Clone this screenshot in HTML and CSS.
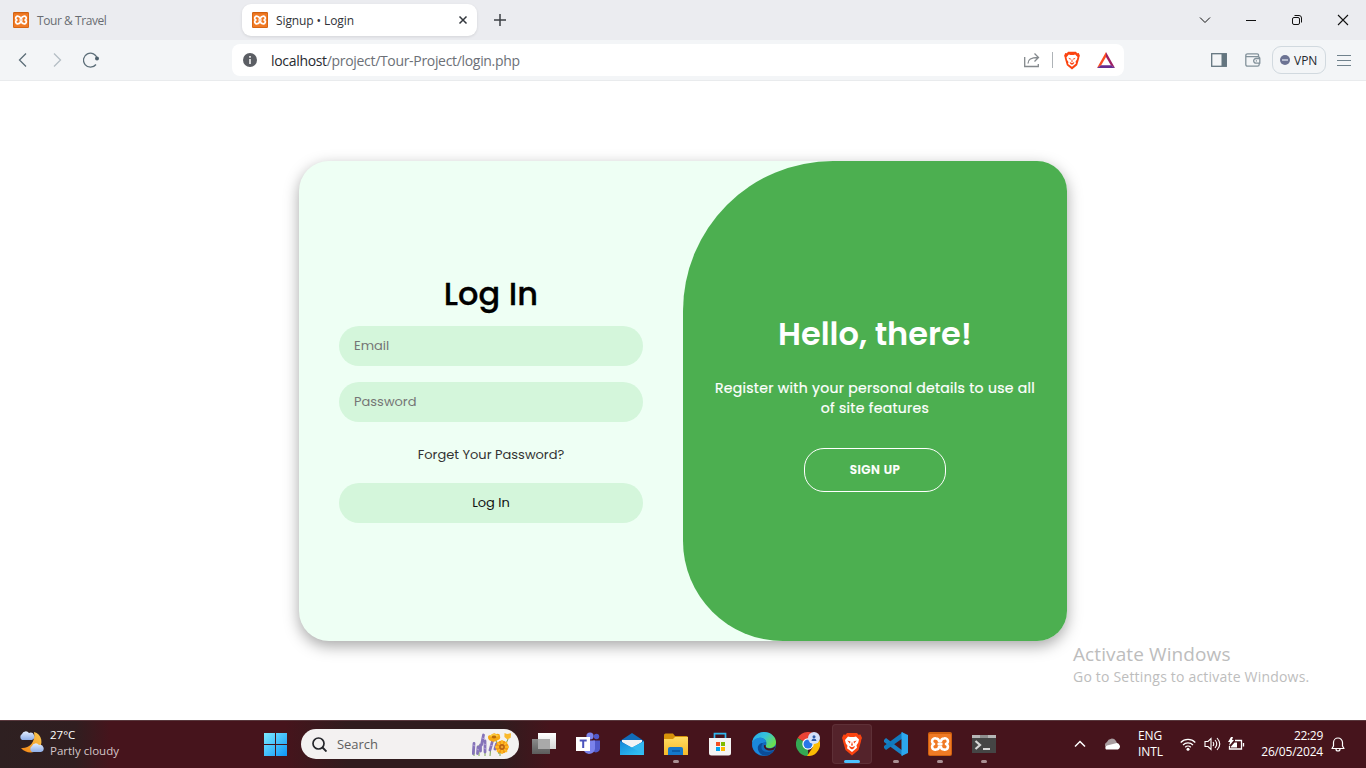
FILE: index.html
```html
<!DOCTYPE html>
<html lang="en">
<head>
<meta charset="utf-8">
<title>Signup • Login</title>
<link rel="stylesheet" href="styles.css">
</head>
<body>
<svg class="defs" aria-hidden="true">
  <defs>
    <symbol id="xampp" viewBox="0 0 24 24">
      <rect width="24" height="24" rx="2" fill="#d0600f"/>
      <rect x="1" y="2" width="22" height="21" rx="1" fill="#f07a25"/>
      <path d="M8 6.500a2.900 2.900 0 0 0-2 5.500 2.900 2.900 0 0 0 2 5.500c2.200 0 2.800-1 3-2.700h2c.2 1.700.8 2.700 3 2.700a2.900 2.900 0 0 0 2-5.500 2.900 2.900 0 0 0-2-5.500c-2.200 0-2.800 1-3 2.700h-2c-.2-1.700-.8-2.700-3-2.700zM9.500 12h5" fill="none" stroke="#fff" stroke-width="2.600" stroke-linejoin="round"/>
    </symbol>
    <symbol id="brave" viewBox="0 0 20 24">
      <path d="M5 1h10l1.500 1.800 2-.3L20 6l-.8 2L19 9.500 16.500 18 10 23.500 3.500 18 1 9.500.8 8 0 6l1.500-3.500 2 .3z" fill="#fb4310"/>
      <path d="M6 4.500l2 .5h4l2-.5 3 3-.8 3.300-1.700 2.500.5 2.500L10 20l-5-3.700.5-2.500-1.700-2.500L3 8z" fill="#fff"/>
      <path d="M5.300 8.500l3.200 1-.6 2zM14.700 8.500l-3.200 1 .6 2zM10 9.500l1 4h-2zM7 14l3 1.300 3-1.300-1 2.300-2 1.200-2-1.200z" fill="#fb4310"/>
    </symbol>
    <linearGradient id="winG" x1="0" y1="0" x2="1" y2="1"><stop offset="0" stop-color="#7ceaff"/><stop offset="1" stop-color="#0c95f8"/></linearGradient>
    <linearGradient id="edgeA" x1="0" y1="0" x2="1" y2=".6"><stop offset="0" stop-color="#27a9e8"/><stop offset=".5" stop-color="#35c1dc"/><stop offset="1" stop-color="#6be04d"/></linearGradient>
    <linearGradient id="folderG" x1="0" y1="0" x2="0" y2="1"><stop offset="0" stop-color="#ffdc62"/><stop offset="1" stop-color="#f6b92a"/></linearGradient>
    <linearGradient id="mailG" x1="0" y1="0" x2="1" y2="1"><stop offset="0" stop-color="#1387d8"/><stop offset="1" stop-color="#35c8f7"/></linearGradient>
    <linearGradient id="moonG" x1="1" y1="0" x2="0" y2="1"><stop offset="0" stop-color="#f9ca52"/><stop offset="1" stop-color="#f58411"/></linearGradient>
    <linearGradient id="cloudG" x1="0" y1="0" x2="0" y2="1"><stop offset="0" stop-color="#e3edfd"/><stop offset="1" stop-color="#8eaee8"/></linearGradient>
    <linearGradient id="whiteG" x1="0" y1="0" x2="0" y2="1"><stop offset="0" stop-color="#fff"/><stop offset="1" stop-color="#d6d6d6"/></linearGradient>
    <linearGradient id="grayG" x1="0" y1="0" x2="0" y2="1"><stop offset="0" stop-color="#8a8a8a"/><stop offset="1" stop-color="#5c5c5c"/></linearGradient>
  </defs>
</svg>

<header class="tabstrip">
  <div class="tab">
    <svg class="favicon"><use href="#xampp"/></svg><span class="tab-title t-tour">Tour &amp; Travel</span>
  </div>
  <div class="tab active">
    <svg class="favicon"><use href="#xampp"/></svg><span class="tab-title t-sign">Signup • Login</span>
    <svg class="tab-close" viewBox="0 0 10 10"><path d="M1.500 1.500l7 7m0-7l-7 7" stroke="#33373d" stroke-width="1.500"/></svg>
  </div>
  <svg class="newtab" viewBox="0 0 12 12"><path d="M6 0v12M0 6h12" stroke="#3c3f44" stroke-width="1.500"/></svg>
  <div class="window-controls">
    <svg viewBox="0 0 12 12"><path d="M1 3.500l5 5 5-5" fill="none" stroke="#111" stroke-width="1"/></svg>
    <svg viewBox="0 0 12 12"><path d="M1 6.500h10" stroke="#111"/></svg>
    <svg viewBox="0 0 12 12"><rect x="1.500" y="3.500" width="7" height="7" rx="1.500" fill="none" stroke="#111"/><path d="M3.500 1.500H8A2.500 2.500 0 0 1 10.500 4v4.500" fill="none" stroke="#111"/></svg>
    <svg viewBox="0 0 12 12"><path d="M1 1l10 10M11 1L1 11" stroke="#111" stroke-width="1.100"/></svg>
  </div>
</header>

<nav class="toolbar">
  <div class="nav-buttons">
    <svg viewBox="0 0 16 16"><path d="M11 1.500L4.500 8l6.500 6.500" fill="none" stroke="#5b6d78" stroke-width="1.300"/></svg>
    <svg viewBox="0 0 16 16"><path d="M5 1.500L11.500 8 5 14.500" fill="none" stroke="#b4bec5" stroke-width="1.300"/></svg>
    <svg viewBox="0 0 16 16"><path d="M14.300 6.500A7 7 0 1 0 13 12.500" fill="none" stroke="#5b6d78" stroke-width="1.300"/><circle cx="14" cy="6.500" r="2" fill="#4e606c"/></svg>
  </div>
  <div class="address">
    <svg class="info" viewBox="0 0 14 14"><circle cx="7" cy="7" r="7" fill="#5b5e64"/><path d="M7 3v1.700M7 6v5" stroke="#f3f3f3" stroke-width="1.600"/></svg>
    <span class="url"><b>localhost</b>/project/Tour-Project/login.php</span>
    <svg class="share" viewBox="0 0 16 16"><path d="M.7 5v9.500h13.600V12M4 11.500c0-4.500 3-6 10-6M10.500 1.500l4 4-4 4" fill="none" stroke="#84898d" stroke-width="1.300"/></svg>
    <i class="rule"></i>
    <svg class="brave-small"><use href="#brave"/></svg>
    <svg class="bat" viewBox="0 0 18 16"><path d="M9 0L0 16l4-2.500L9 5z" fill="#fb4c20"/><path d="M9 0l9 16-4-2.500L9 5z" fill="#9e1f63"/><path d="M0 16h18l-4-2.700H4z" fill="#662d91"/></svg>
  </div>
  <div class="extras">
    <svg class="side" viewBox="0 0 16 14"><rect x=".7" y=".7" width="14.600" height="12.600" fill="none" stroke="#63757f" stroke-width="1.300"/><path d="M10.500 1h5v12h-5z" fill="#63757f"/></svg>
    <svg class="wallet" viewBox="0 0 16 14"><path d="M13.500 3.500V2A1.200 1.200 0 0 0 12.300.8H2.500A1.700 1.700 0 0 0 .8 2.500v9a1.700 1.700 0 0 0 1.700 1.700h10a1.700 1.700 0 0 0 1.700-1.700v-1M.8 2.500q0 1.200 1.700 1.200H13a1.700 1.700 0 0 1 1.800 1.700v4.800H11a2.300 2.300 0 0 1 0-4.700h3.800M10.800 7.900H12" fill="none" stroke="#82919a" stroke-width="1.300"/></svg>
    <div class="vpn"><svg viewBox="0 0 10 10"><circle cx="5" cy="5" r="5" fill="#6c7393"/><path d="M2 5h6" stroke="#d7dbea" stroke-width="1.400"/></svg><span>VPN</span></div>
    <svg class="menu" viewBox="0 0 14 12"><path d="M0 1.500h14M0 6.500h14M0 11.500h14" stroke="#70828d" stroke-width="1.200"/></svg>
  </div>
</nav>

<main class="page">
  <section class="card">
    <form class="login">
      <h1>Log In</h1>
      <input class="field" type="email" placeholder="Email">
      <input class="field pw" type="password" placeholder="Password">
      <a class="forgot">Forget Your Password?</a>
      <button class="submit" type="button">Log In</button>
    </form>
    <div class="welcome">
      <h1>Hello, there!</h1>
      <p>Register with your personal details to use all<br>of site features</p>
      <button class="signup" type="button">SIGN UP</button>
    </div>
  </section>
  <div class="watermark"><span class="w1">Activate Windows</span><span class="w2">Go to Settings to activate Windows.</span></div>
</main>

<footer class="taskbar">
  <div class="weather">
    <svg viewBox="0 0 26 24"><path d="M16 2c8 2 10 12 4 18-5 4-13 3-17-2 7 1 15-5 13-16z" fill="url(#moonG)"/><path d="M4 10a3.500 3.500 0 0 1 0-6 4 4 0 0 1 7-1 3.500 3.500 0 0 1 3 7z" fill="url(#cloudG)"/><path d="M14 22a3.500 3.500 0 0 1 0-6 4 4 0 0 1 7-1 3.500 3.500 0 0 1 2 7z" fill="url(#cloudG)"/></svg>
    <div><span class="temp">27°C</span><span class="sky">Partly cloudy</span></div>
  </div>
  <svg class="start" viewBox="0 0 23 23"><path d="M0 0h11v11H0zM12 0h11v11H12zM0 12h11v11H0zM12 12h11v11H12z" fill="url(#winG)"/></svg>
  <div class="search">
    <svg class="glass" viewBox="0 0 15 15"><circle cx="6.500" cy="6.500" r="5.500" fill="none" stroke="#24262b" stroke-width="1.700"/><path d="M10.500 10.500l4 4" stroke="#24262b" stroke-width="1.900"/></svg>
    <span>Search</span>
    <svg class="flowers" viewBox="0 0 40 25">
      <path d="M2 24V14M7 24V13M13 24V9M18 24l1-12M28 24v-8M24 8l3 14M36 7l-6 14" stroke="#7ba551" stroke-width="1"/>
      <path d="M2 11.500l-.7 10M6 15l-.5 6.500M11.500 3l-2 10M13 9v11M8.500 13v6M20.500 9l-2.500 9M24.500 12l-1.500 5" fill="none" stroke="#8573b8" stroke-width="2.800" stroke-linecap="round"/>
      <path d="M1 13l2 1M5 17l2 1M10 6l3 1M12 12l2.500 1M12 16l2 1M18 13l3 1" stroke="#b4a3dd" stroke-width=".9"/>
      <path d="M16 5q0-2 3-2 3-3 5-1 4-1 4 2 1 3-2 4-4 3-7 1-3-1-3-4z" fill="#f6a813"/><path d="M17 4q5-4 10 0-5 2-10 0z" fill="#ffcf40"/><ellipse cx="22" cy="5" rx="2.300" ry="1.400" fill="#b96a09"/>
      <path d="M32.500 1l2.500 1 4-.8-.3 4.500-3.300 1.800-3-2.500z" fill="#fab92d"/>
      <circle cx="30" cy="15" r="6.500" fill="#f59b12"/><path d="M30 8v14M23 15h14M25 10l10 10M35 10L25 20" stroke="#ffc02d" stroke-width="1.500"/><circle cx="30" cy="15" r="2.900" fill="#b86012"/><circle cx="30" cy="15" r="1.300" fill="#eda22d"/>
    </svg>
  </div>
  <div class="apps">
    <div class="app"><svg viewBox="0 0 24 24"><path d="M0 7h18v15H0z" fill="url(#grayG)"/><path d="M6 1h18v16H6z" fill="url(#whiteG)"/><path d="M6 7h12v10H6z" fill="#a9a9a9"/></svg></div>
    <div class="app"><svg viewBox="0 0 24 24"><circle cx="20.500" cy="4.500" r="2.700" fill="#5059c9"/><path d="M17 8.500h7V16a4 4 0 0 1-7 3z" fill="#5059c9"/><circle cx="14" cy="4" r="3.600" fill="#7b83eb"/><path d="M8 8.500h11V17a6 6 0 0 1-11 2z" fill="#7b83eb"/><path d="M0 5h14v14H0z" fill="#fff"/><path d="M3.700 8.500h7M7.200 8.500V16" stroke="#4b53bc" stroke-width="2"/></svg></div>
    <div class="app"><svg viewBox="0 0 24 24"><path d="M0 9l12-8 12 8v14H0z" fill="#116cb9"/><path d="M2 8h20v2l-10 6L2 10z" fill="#f1f3f5"/><path d="M0 9.500l12 6L24 9.500V23H0z" fill="url(#mailG)"/><path d="M12 15.500l12-6V23z" fill="#33b8f0"/></svg></div>
    <div class="app run"><svg viewBox="0 0 24 24"><path d="M0 3a1.500 1.500 0 0 1 1.500-1.500H9L11 4h11.500A1.500 1.500 0 0 1 24 5.500V10H0z" fill="#d79209"/><path d="M0 7h9l2-2h13v18H0z" fill="url(#folderG)"/><path d="M4 23v-6a2 2 0 0 1 2-2h11a2 2 0 0 1 2 2v6z" fill="#1578ca"/><path d="M8 19h8" stroke="#0a559d" stroke-width="1.500"/></svg></div>
    <div class="app"><svg viewBox="0 0 24 24"><path d="M6.500 7V1.700h11V7" fill="none" stroke="#32b7ed" stroke-width="1.700"/><path d="M1 6h22v15a2.500 2.500 0 0 1-2.500 2.500h-17A2.500 2.500 0 0 1 1 21z" fill="#f4f4f4"/><path d="M8 10h4v4H8z" fill="#f25022"/><path d="M13 10h4v4h-4z" fill="#7fba00"/><path d="M8 15h4v4H8z" fill="#00a4ef"/><path d="M13 15h4v4h-4z" fill="#ffb900"/></svg></div>
    <div class="app"><svg viewBox="0 0 24 24"><circle cx="12" cy="12" r="12" fill="#1268bd"/><path d="M0 11C1 4 6 0 12 0c7 0 12 5 12 10 0 4-3 6-7 6-3 0-4-1-3-2.500C16 8 11 5 7 6c-4 1-6 3-7 5z" fill="url(#edgeA)"/><path d="M1 9c4-5 12-4 13 1-5-1-8 8-2 13-8 1-14-7-11-14z" fill="#1b88dc"/><path d="M11 11c-5 7 3 12 11 7-4 7-12 7-15 2-3-5 0-9 4-9z" fill="#0b4c99"/><path d="M14 13.500c-1 2 1 3 4 3 2 0 4-1 5.500-2.500l-1.300 3.600C18 20 11 18 12 13z" fill="#45151d"/></svg></div>
    <div class="app"><svg viewBox="0 0 24 24"><path d="M12 12L1.600 6a12 12 0 0 1 20.800 0z" fill="#e94335"/><path d="M12 12V24A12 12 0 0 1 1.600 6z" fill="#34a853"/><path d="M12 12l10.400-6A12 12 0 0 1 11 24l6-9z" fill="#fbbc04"/><circle cx="12" cy="12" r="5.700" fill="#fff"/><circle cx="12" cy="12" r="4.500" fill="#2877e8"/><circle cx="18" cy="6" r="6" fill="#d5e1fa"/><circle cx="18" cy="4.700" r="1.500" fill="#315da9"/><path d="M15.500 9a2.500 2.500 0 0 1 5 0z" fill="#315da9"/></svg></div>
    <div class="app current"><svg class="brave-icon"><use href="#brave"/></svg></div>
    <div class="app run"><svg viewBox="0 0 24 24"><path d="M0 8l2-2 17 13v5L0 10z" fill="#187fc4"/><path d="M0 16l2 2L19 6V0L0 14z" fill="#1179bd"/><path d="M17.500 0L24 3v18l-6.500 3z" fill="#2ca7ef"/></svg></div>
    <div class="app run"><svg><use href="#xampp"/></svg></div>
    <div class="app run"><svg viewBox="0 0 24 24"><path d="M0 3h24v18H0z" fill="#454545"/><path d="M0 3h24v3H0z" fill="#b6b6b6"/><path d="M8 3h8v3H8z" fill="#8e8e8e"/><path d="M3.500 9l4.500 4-4.500 4" fill="none" stroke="#d7d7d7" stroke-width="2.200"/><path d="M11 17h7" stroke="#f4f4f4" stroke-width="1.700"/></svg></div>
  </div>
  <div class="tray">
    <svg class="chev" viewBox="0 0 12 8"><path d="M1 6.500l5-5 5 5" fill="none" stroke="#fff" stroke-width="1.500"/></svg>
    <svg class="cloud" viewBox="0 0 16 12"><path d="M3 10a3.200 3.200 0 0 1 0-6A5 5 0 0 1 12 3l2 4z" fill="#a99da0"/><path d="M2 11.500a2.500 2.500 0 0 1 1-4l4-1 4-1a3.200 3.200 0 0 1 3 6z" fill="#fff"/></svg>
    <div class="lang"><span>ENG</span><span class="intl">INTL</span></div>
    <svg class="wifi" viewBox="0 0 16 13"><path d="M.7 4.500a10.300 10.300 0 0 1 14.600 0M3 7a7 7 0 0 1 10 0M5.200 9.300a4 4 0 0 1 5.600 0" fill="none" stroke="#fff" stroke-width="1.200"/><circle cx="8" cy="11.300" r="1.500" fill="#fff"/></svg>
    <svg class="sound" viewBox="0 0 17 14"><path d="M1 4.500h3l3-3v11l-3-3H1zM9 5q1.500 2 0 4M11 3q3.500 4 0 8M13 1q5.500 6 0 12" fill="none" stroke="#fff" stroke-width="1.100"/></svg>
    <svg class="battery" viewBox="0 0 17 14"><path d="M7 3.500h6.500v8.500H1.500V9M15.500 6v3.500" fill="none" stroke="#fff" stroke-width="1.300"/><path d="M6.500 5.500H9v5H3V9.500z" fill="#fff"/><path d="M3 0L0 5h2L1 9l5-6H4L5 0z" fill="#fff"/></svg>
    <div class="clock"><span class="time">22:29</span><span class="date">26/05/2024</span></div>
    <svg class="bell" viewBox="0 0 14 15"><path d="M1 11.500h12L11.500 9V5.500a4.500 4.500 0 0 0-9 0V9zM5 12a2 2 0 0 0 4 0" fill="none" stroke="#fff" stroke-width="1.200" stroke-linejoin="round"/></svg>
  </div>
</footer>
</body>
</html>
```
FILE: styles.css
```css
* { box-sizing: border-box; }
body {
  margin: 0; width: 1366px; height: 768px; overflow: hidden;
  display: flex; flex-direction: column; background: #fff;
  font-family: "Segoe UI", "Open Sans", sans-serif; font-size: 12px;
}
svg { display: block; flex: none; }
.defs { position: absolute; width: 0; height: 0; }
span { white-space: nowrap; }

.tabstrip { height: 40px; flex: none; background: #ebecf0; display: flex; align-items: center; }
.tab { width: 235px; height: 32px; display: flex; align-items: center; padding: 0 9px 0 10px; color: #696c72; border-radius: 9px; }
.tab:first-child { margin: 0 4px 0 3px; }
.tab.active { background: #fff; color: #303238; box-shadow: 0 1px 3px #0000001a; }
.favicon { width: 16px; height: 16px; margin-right: 8px; }
.tab-title { flex: 1; }
.t-tour { letter-spacing: -.43px; }
.t-sign { letter-spacing: -.1px; }
.tab-close { width: 10px; height: 10px; }
.newtab { width: 12px; height: 12px; margin-left: 17px; }
.window-controls { margin-left: auto; display: flex; gap: 34px; padding-right: 17px; }
.window-controls svg { width: 12px; height: 12px; }

.toolbar { height: 41px; flex: none; background: #f3f5f7; border-bottom: 1px solid #e9ebed; display: flex; align-items: center; }
.nav-buttons { width: 232px; display: flex; gap: 18px; padding-left: 15px; }
.nav-buttons svg { width: 16px; height: 16px; }
.address { width: 892px; height: 32px; background: #fff; border-radius: 8px; display: flex; align-items: center; padding: 0 9px 0 11px; }
.info { width: 14px; height: 14px; margin-right: 14px; }
.url { flex: 1; color: #6c7077; font-size: 14px; letter-spacing: -.32px; }
.url b { font-weight: 400; color: #272a30; }
.share { width: 16px; height: 16px; }
.rule { width: 1px; height: 16px; margin: 0 11px 0 12px; background: #aeb3b7; }
.brave-small { width: 16px; height: 19px; margin-right: 17px; }
.bat { width: 18px; height: 16px; }
.extras { flex: 1; display: flex; align-items: center; padding-left: 87px; }
.side { width: 16px; height: 14px; margin-right: 18px; }
.wallet { width: 16px; height: 14px; margin-right: 11px; }
.vpn { width: 54px; height: 28px; border: 1px solid #d1d9df; border-radius: 9px; display: flex; align-items: center; padding-left: 7px; gap: 4px; color: #24272e; }
.vpn svg { width: 10px; height: 10px; }
.menu { width: 14px; height: 12px; margin-left: 11px; }

.page { position: relative; flex: 1; display: flex; justify-content: center; padding-top: 80px; }
.card { width: 768px; height: 480px; display: flex; background: #eefff4; border-radius: 30px; overflow: hidden; box-shadow: 0 5px 15px #00000059; }
.card, .card input, .card button { font-family: Poppins, Inter, sans-serif; font-size: 13px; }
.card h1 { margin: 0; white-space: nowrap; }
.login { width: 384px; padding: 108px 40px 0; display: flex; flex-direction: column; align-items: center; }
.login h1 { font-size: 32px; font-weight: 500; line-height: 49px; height: 57px; -webkit-text-stroke: .3px #000; letter-spacing: .1px; }
.field, .submit { width: 100%; height: 40px; flex: none; border: 0; border-radius: 20px; background: #d4f6db; padding: 0 15px; outline: 0; }
.field { color: #333; }
.field::placeholder { color: #757575; opacity: 1; }
.pw { margin-top: 16px; }
.forgot { margin: 23px 0 18px; height: 20px; line-height: 20px; color: #333; font-size: 13px; }
.submit { color: #111; }
.welcome { width: 384px; display: flex; flex-direction: column; align-items: center; padding-top: 148px; background: #4caf50; color: #fff; border-radius: 150px 0 0 100px; }
.welcome h1 { font-size: 32px; font-weight: 600; line-height: 49px; }
.welcome p { margin: 20px 0 30px; text-align: center; font-size: 14px; font-weight: 400; line-height: 20px; letter-spacing: .3px; white-space: nowrap; -webkit-text-stroke: .2px #fff; }
.signup { width: 142px; height: 44px; padding: 0; border: 1px solid #fff; border-radius: 20px; background: transparent; color: #fff; }
.card .signup { font-size: 12px; font-weight: 600; letter-spacing: .5px; -webkit-text-stroke: .2px #fff; }
.watermark { position: absolute; left: 1073px; top: 560px; color: #bdbdbd; display: flex; flex-direction: column; }
.w1 { font-size: 19px; line-height: 27px; letter-spacing: .1px; }
.w2 { font-size: 14px; line-height: 18px; letter-spacing: .2px; }

.taskbar { height: 48px; flex: none; display: flex; align-items: center; padding-bottom: 1px; color: #fff; border-top: 1px solid #59383d; background: linear-gradient(90deg, #2e2021 0, #301e20 75px, #46141c 110px, #46141c 285px, #301c1e 350px, #301c1e 500px, #46141c 550px, #46141c 1366px); }
.weather { width: 264px; display: flex; padding: 0 0 2px 18px; }
.weather svg { width: 26px; height: 24px; margin: 3px 6px 0 0; }
.weather div { display: flex; flex-direction: column; }
.weather span { line-height: 16px; font-size: 11.500px; }
.weather .sky { color: #d5c6c8; }
.start { width: 23px; height: 23px; }
.search { width: 218px; height: 30px; margin: 0 3px 0 14px; border-radius: 15px; background: #f3f1f1; display: flex; align-items: center; padding: 0 7px 0 11px; color: #606060; }
.search span { flex: 1; font-size: 13px; letter-spacing: -.05px; }
.glass { width: 15px; height: 15px; margin-right: 10px; }
.flowers { width: 40px; height: 25px; }
.apps { display: flex; }
.app { position: relative; width: 40px; height: 40px; margin: 0 2px; display: flex; justify-content: center; align-items: center; border-radius: 4px; }
.app svg { width: 24px; height: 24px; }
.app .brave-icon { width: 20px; height: 24px; }
.current { background: #54232b; box-shadow: inset 0 0 0 1px #5e3037; }
.run::after, .current::after { content: ""; position: absolute; bottom: 1px; left: 17px; width: 6px; height: 3px; border-radius: 2px; background: #aa9094; }
.current::after { left: 12px; width: 16px; background: #4cc2ff; }
.tray { flex: 1; display: flex; align-items: center; justify-content: flex-end; padding-right: 21px; }
.tray div { display: flex; flex-direction: column; font-size: 12px; line-height: 16px; }
.chev { width: 12px; height: 8px; margin-right: 18px; }
.cloud { width: 16px; height: 12px; margin-right: 18px; }
.tray .lang { width: 25px; margin-right: 17px; letter-spacing: -.1px; }
.wifi { width: 16px; height: 13px; margin-right: 8px; }
.sound { width: 17px; height: 14px; margin-right: 7px; }
.battery { width: 17px; height: 14px; margin-right: 9px; }
.tray .clock { width: 69px; align-items: flex-end; margin-right: 8px; }
.time { letter-spacing: -.3px; }
.date { letter-spacing: -.2px; }
.bell { width: 14px; height: 15px; }
```
